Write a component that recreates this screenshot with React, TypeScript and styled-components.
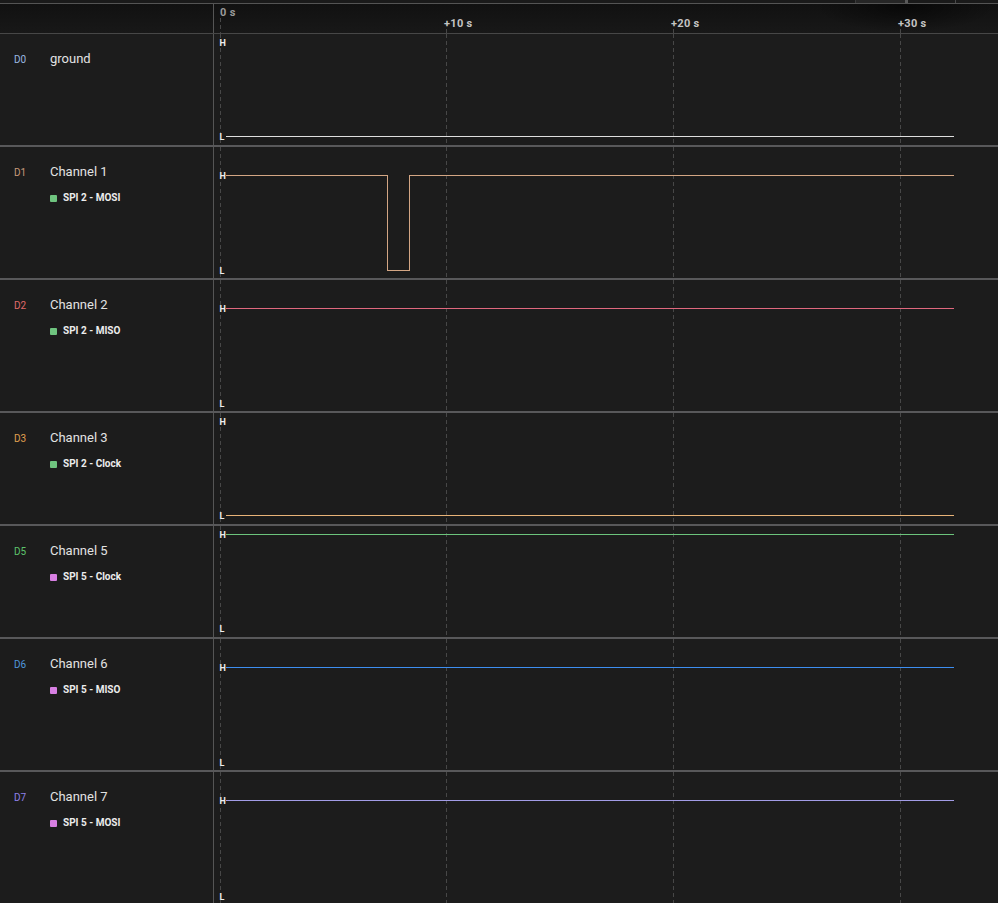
import React from "react";
import styled, { createGlobalStyle } from "styled-components";

const GlobalStyle = createGlobalStyle`
  html, body { margin: 0; padding: 0; background: #1c1c1c; }
  body { font-family: Roboto, "Liberation Sans", sans-serif; overflow: hidden; }
`;

const PX_PER_S = 226.7 / 10;
const ORIGIN = 5.5;
const WAVE_W = 783;
const TRACE_START = 12;
const TRACE_END = 740;
const TICKS = [0, 10, 20, 30];

type Channel = {
  id: string;
  name: string;
  idColor: string;
  color: string;
  level: "high" | "low";
  tall: boolean;
  sub?: { label: string; color: string };
  pulse?: [number, number];
};

const GREEN = "#6fc47f";
const PINK = "#d77fe2";

const CHANNELS: Channel[] = [
  { id: "D0", name: "ground", idColor: "#9ab8e0", color: "#dedede", level: "low", tall: false },
  { id: "D1", name: "Channel 1", idColor: "#c89a7a", color: "#d4a684", level: "high", tall: true, sub: { label: "SPI 2 - MOSI", color: GREEN }, pulse: [173, 195] },
  { id: "D2", name: "Channel 2", idColor: "#e06a6a", color: "#e0687e", level: "high", tall: true, sub: { label: "SPI 2 - MISO", color: GREEN } },
  { id: "D3", name: "Channel 3", idColor: "#e0a050", color: "#e8b378", level: "low", tall: false, sub: { label: "SPI 2 - Clock", color: GREEN } },
  { id: "D5", name: "Channel 5", idColor: "#5cc46c", color: "#6cc47c", level: "high", tall: false, sub: { label: "SPI 5 - Clock", color: PINK } },
  { id: "D6", name: "Channel 6", idColor: "#4f96dc", color: "#3d8ef0", level: "high", tall: true, sub: { label: "SPI 5 - MISO", color: PINK } },
  { id: "D7", name: "Channel 7", idColor: "#8f80e8", color: "#a29ce6", level: "high", tall: true, sub: { label: "SPI 5 - MOSI", color: PINK } },
];

const Page = styled.div`
  width: 998px;
  height: 903px;
  overflow: hidden;
  display: flex;
  flex-direction: column;
  background: #1c1c1c;
`;

const TopStrip = styled.div`
  height: 3px;
  flex: none;
  display: flex;
  background: #1a1a1a;
  border-bottom: 1px solid #545454;
`;

const StripSpacer = styled.div<{ $w: number }>`
  width: ${(p) => p.$w}px;
  flex: none;
`;

const StripTab = styled.div`
  width: 49px;
  flex: none;
  background: #262626;
  border-left: 1px solid #3a3a3a;
`;

const StripKnob = styled.div`
  width: 3px;
  flex: none;
  background: #5a5a5a;
`;

const StripLine = styled.div`
  width: 1px;
  flex: none;
  background: #4a4a4a;
`;

const Header = styled.div`
  height: 29px;
  flex: none;
  display: grid;
  grid-template-columns: 214px 1fr;
  border-bottom: 1px solid #474747;
  background:
    radial-gradient(ellipse 90px 26px at 905px 2px, rgba(0, 0, 0, 0.55), rgba(0, 0, 0, 0)),
    linear-gradient(#111111, #181818);
`;

const HeaderSide = styled.div`
  border-right: 1px solid #555;
`;

const Ruler = styled.svg`
  display: block;
  width: ${WAVE_W}px;
  height: 29px;
`;

const RulerLabel = styled.text<{ $dim?: boolean }>`
  font-family: Roboto, "Liberation Sans", sans-serif;
  font-size: 11px;
  font-weight: 700;
  letter-spacing: 0.3px;
  fill: ${(p) => (p.$dim ? "#9a9a9a" : "#c4c4c4")};
`;

const Rows = styled.div`
  flex: 1;
  display: flex;
  flex-direction: column;
`;

const Row = styled.div<{ $tall: boolean }>`
  height: ${(p) => (p.$tall ? 133 : 113)}px;
  flex: none;
  box-sizing: border-box;
  display: grid;
  grid-template-columns: 214px 1fr;
  border-bottom: 2px solid #58585a;
  &:last-child {
    border-bottom: none;
  }
`;

const LabelCell = styled.div`
  border-right: 1px solid #555;
  padding: 17px 0 0 14px;
  display: flex;
  flex-direction: column;
`;

const NameLine = styled.div`
  display: flex;
  align-items: baseline;
  height: 16px;
  line-height: 16px;
`;

const ChannelId = styled.span<{ $color: string }>`
  width: 36px;
  font-size: 10px;
  color: ${(p) => p.$color};
`;

const ChannelName = styled.span`
  font-size: 13px;
  color: #e2e2e2;
`;

const SubLine = styled.div`
  margin: 12px 0 0 36px;
  display: flex;
  align-items: center;
  gap: 6px;
  height: 12px;
`;

const Swatch = styled.span<{ $color: string }>`
  width: 7px;
  height: 7px;
  border-radius: 1px;
  background: ${(p) => p.$color};
`;

const SubLabel = styled.span`
  font-size: 10px;
  font-weight: 700;
  color: #ececec;
  line-height: 12px;
`;

const WaveCell = styled.div`
  position: relative;
  min-width: 0;
`;

const WaveSvg = styled.svg`
  display: block;
  width: ${WAVE_W}px;
  height: 100%;
`;

const LevelText = styled.text`
  font-family: Roboto, "Liberation Sans", sans-serif;
  font-size: 9px;
  font-weight: 700;
  fill: #ececec;
`;

const tickX = (s: number) => Math.round(ORIGIN + s * PX_PER_S) + 0.5;

function Wave({ ch }: { ch: Channel }) {
  const h = ch.tall ? 131 : 111;
  const hTop = ch.tall ? 28 : 8;
  const hlGap = ch.tall ? 95 : 94;
  const yH = hTop + 0.5;
  const yL = hTop + hlGap + 0.5;
  let points: string;
  if (ch.pulse) {
    const [a, b] = ch.pulse;
    points = `${TRACE_START},${yH} ${a + 0.5},${yH} ${a + 0.5},${yL} ${b + 0.5},${yL} ${b + 0.5},${yH} ${TRACE_END},${yH}`;
  } else {
    const y = ch.level === "high" ? yH : yL;
    points = `${TRACE_START},${y} ${TRACE_END},${y}`;
  }
  return (
    <WaveSvg viewBox={`0 0 ${WAVE_W} ${h}`} preserveAspectRatio="none" shapeRendering="crispEdges">
      {TICKS.map((s) => (
        <line key={s} x1={tickX(s)} x2={tickX(s)} y1={0} y2={h} stroke="#474747" strokeWidth={1} strokeDasharray="4 3" />
      ))}
      <polyline points={points} fill="none" stroke={ch.color} strokeWidth={1} />
      <LevelText x={5.5} y={hTop + 3.5}>H</LevelText>
      <LevelText x={5.5} y={hTop + hlGap + 3.5}>L</LevelText>
    </WaveSvg>
  );
}

export default function App() {
  return (
    <>
      <GlobalStyle />
      <Page>
        <TopStrip>
          <StripSpacer $w={855} />
          <StripTab />
          <StripKnob />
          <StripSpacer $w={47} />
          <StripLine />
        </TopStrip>
        <Header>
          <HeaderSide />
          <Ruler viewBox={`0 0 ${WAVE_W} 29`} shapeRendering="crispEdges">
            {TICKS.map((s) => (
              <line
                key={s}
                x1={tickX(s)}
                x2={tickX(s)}
                y1={s === 0 ? 14 : 25}
                y2={29}
                stroke="#474747"
                strokeWidth={1}
                strokeDasharray="4 3"
              />
            ))}
            <RulerLabel x={6} y={12} $dim>0 s</RulerLabel>
            {TICKS.slice(1).map((s) => (
              <RulerLabel key={s} x={tickX(s) - 2.5} y={23}>
                +{s} s
              </RulerLabel>
            ))}
          </Ruler>
        </Header>
        <Rows>
          {CHANNELS.map((ch) => (
            <Row key={ch.id} $tall={ch.tall}>
              <LabelCell>
                <NameLine>
                  <ChannelId $color={ch.idColor}>{ch.id}</ChannelId>
                  <ChannelName>{ch.name}</ChannelName>
                </NameLine>
                {ch.sub && (
                  <SubLine>
                    <Swatch $color={ch.sub.color} />
                    <SubLabel>{ch.sub.label}</SubLabel>
                  </SubLine>
                )}
              </LabelCell>
              <WaveCell>
                <Wave ch={ch} />
              </WaveCell>
            </Row>
          ))}
        </Rows>
      </Page>
    </>
  );
}
